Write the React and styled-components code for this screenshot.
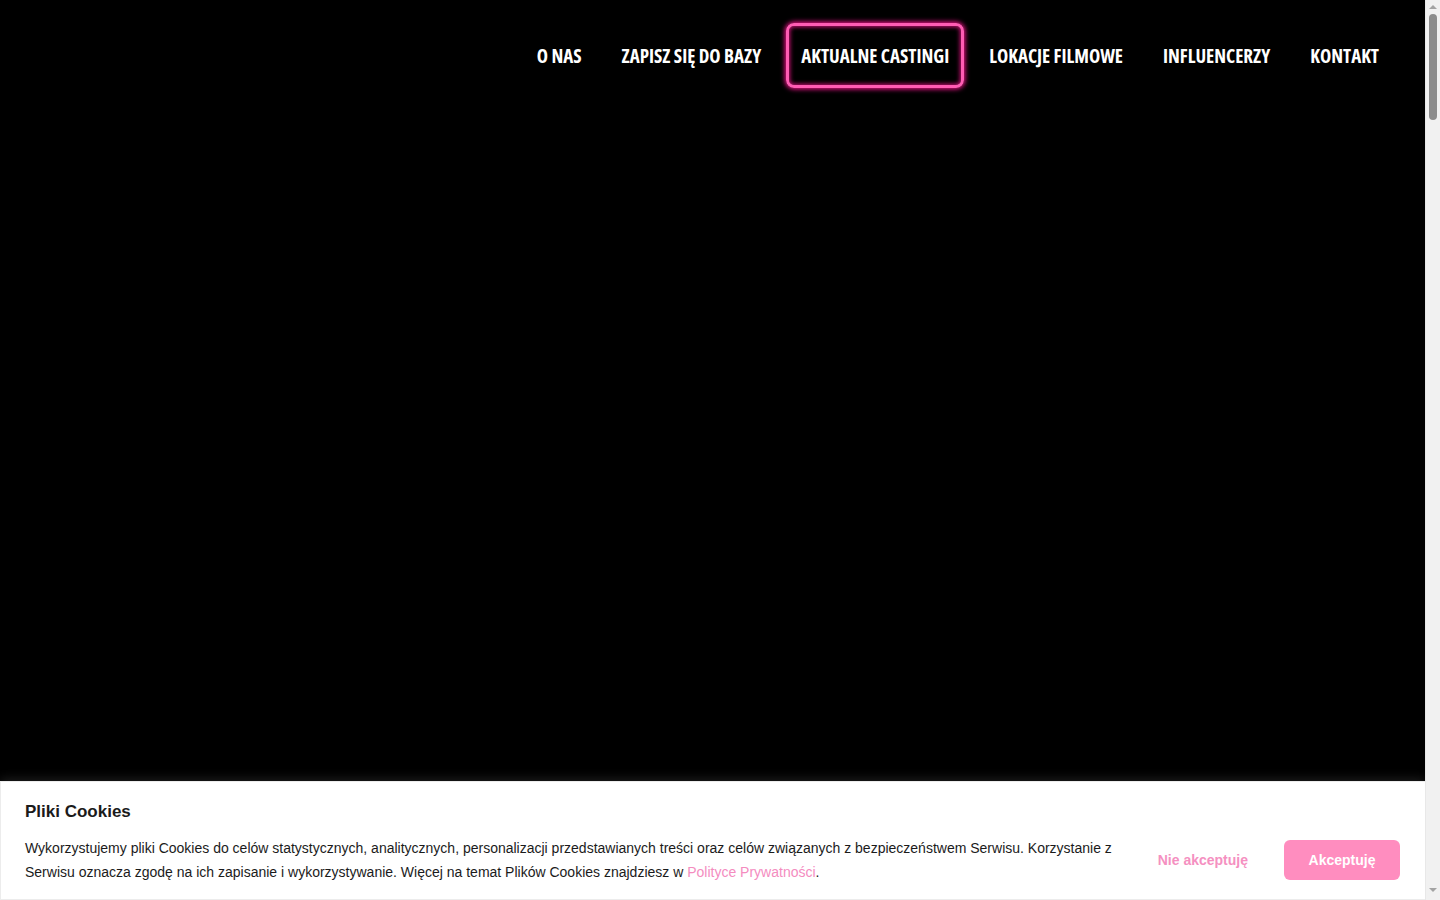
import styled, { createGlobalStyle } from 'styled-components';

const GlobalStyle = createGlobalStyle`
  html, body {
    margin: 0;
    padding: 0;
    background: #000;
    overflow: hidden;
  }
  * {
    box-sizing: border-box;
  }
`;

const navItems = [
  { label: 'O NAS' },
  { label: 'ZAPISZ SIĘ DO BAZY' },
  { label: 'AKTUALNE CASTINGI', active: true },
  { label: 'LOKACJE FILMOWE' },
  { label: 'INFLUENCERZY' },
  { label: 'KONTAKT' },
];

function App() {
  return (
    <Screen>
      <GlobalStyle />
      <Viewport>
        <Header>
          <Nav>
            {navItems.map((item) => (
              <NavLink key={item.label} href="#" $active={item.active}>
                {item.label}
              </NavLink>
            ))}
          </Nav>
        </Header>
        <Hero />
        <CookieBar>
          <CookieTitle>Pliki Cookies</CookieTitle>
          <CookieRow>
            <CookieText>
              Wykorzystujemy pliki Cookies do celów statystycznych, analitycznych, personalizacji
              przedstawianych treści oraz celów związanych z bezpieczeństwem Serwisu. Korzystanie z
              Serwisu oznacza zgodę na ich zapisanie i wykorzystywanie. Więcej na temat Plików Cookies
              znajdziesz w <PinkLink href="#">Polityce Prywatności</PinkLink>.
            </CookieText>
            <Buttons>
              <DeclineButton>Nie akceptuję</DeclineButton>
              <AcceptButton>Akceptuję</AcceptButton>
            </Buttons>
          </CookieRow>
        </CookieBar>
      </Viewport>
      <ScrollTrack>
        <Arrow $up />
        <Thumb />
        <TrackSpace />
        <Arrow />
      </ScrollTrack>
    </Screen>
  );
}

export default App;

const Screen = styled.div`
  display: flex;
  height: 100vh;
  background: #000;
`;

const Viewport = styled.div`
  flex: 1;
  display: flex;
  flex-direction: column;
  min-width: 0;
`;

const Header = styled.header`
  display: flex;
  justify-content: flex-end;
  padding: 23px 31px 0 0;
`;

const Nav = styled.nav`
  display: flex;
  align-items: center;
  gap: 10px;
`;

const NavLink = styled.a`
  display: flex;
  align-items: center;
  height: 65px;
  padding: 0 12px;
  font-family: 'Open Sans', 'DejaVu Sans Condensed', sans-serif;
  font-stretch: 75%;
  font-weight: 700;
  font-size: 19px;
  color: #fff;
  text-decoration: none;
  border-radius: 8px;
  border: 3px solid ${(p) => (p.$active ? '#ff5cb4' : 'transparent')};
  box-shadow: ${(p) =>
    p.$active
      ? '0 0 5px 1px #ff1493, inset 0 0 4px 1px rgba(255, 20, 147, 0.8)'
      : 'none'};
`;

const Hero = styled.div`
  flex: 1;
`;

const CookieBar = styled.div`
  height: 119px;
  background: #fff;
  border: 1px solid #ececec;
  border-right: none;
  box-shadow: 0 -2px 10px rgba(255, 255, 255, 0.12);
  padding: 18px 25px 0 24px;
  font-family: 'Liberation Sans', 'DejaVu Sans', sans-serif;
  color: #1b1b1b;
`;

const CookieTitle = styled.div`
  font-weight: 700;
  font-size: 17px;
  line-height: 24px;
`;

const CookieRow = styled.div`
  display: flex;
  align-items: center;
  justify-content: space-between;
  margin-top: 12px;
`;

const CookieText = styled.p`
  margin: 0;
  max-width: 1120px;
  font-size: 14px;
  line-height: 24px;
`;

const PinkLink = styled.a`
  color: #f48cbf;
  text-decoration: none;
`;

const Buttons = styled.div`
  display: flex;
  align-items: center;
  gap: 36px;
`;

const DeclineButton = styled.button`
  border: none;
  background: none;
  font-family: 'Liberation Sans', sans-serif;
  font-size: 14px;
  font-weight: 700;
  color: #f590c1;
  cursor: pointer;
  padding: 0;
`;

const AcceptButton = styled.button`
  width: 116px;
  height: 40px;
  border: none;
  border-radius: 6px;
  background: #ff8dbf;
  color: #fff;
  font-family: 'Liberation Sans', sans-serif;
  font-size: 14px;
  font-weight: 700;
  cursor: pointer;
`;

const ScrollTrack = styled.div`
  width: 15px;
  flex-shrink: 0;
  display: flex;
  flex-direction: column;
  align-items: center;
  background: #f1f1f1;
  border-left: 1px solid #e8e8e8;
  padding: 5px 0 8px;
`;

const Arrow = styled.div`
  width: 0;
  height: 0;
  border-left: 4px solid transparent;
  border-right: 4px solid transparent;
  ${(p) =>
    p.$up ? 'border-bottom: 4px solid #a3a3a3;' : 'border-top: 4px solid #a3a3a3;'}
`;

const Thumb = styled.div`
  width: 8px;
  height: 106px;
  margin-top: 5px;
  border-radius: 4px;
  background: #8c8c8c;
`;

const TrackSpace = styled.div`
  flex: 1;
`;
